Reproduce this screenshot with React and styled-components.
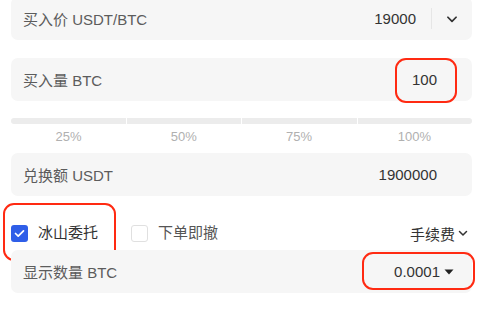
import React from 'react'
import styled, { createGlobalStyle } from 'styled-components'

const GlobalStyle = createGlobalStyle`
  body {
    margin: 0;
    background: #fff;
    font-family: "Liberation Sans", "Noto Sans CJK SC", sans-serif;
    overflow: hidden;
  }
`

const Page = styled.div`
  width: 461px;
  margin: -3px 0 0 11px;
  display: flex;
  flex-direction: column;
`

const Field = styled.div`
  height: 43px;
  box-sizing: border-box;
  background: #f6f6f6;
  border-radius: 7px;
  display: flex;
  align-items: center;
  padding: 0 ${p => p.$pr || 35}px 0 12px;
  margin-top: ${p => p.$mt || 0}px;
  position: relative;
`

const Label = styled.span`
  flex: 1;
  color: #5c5c5c;
  font-size: 15px;
`

const Value = styled.span`
  color: #333;
  font-size: 15px;
  line-height: 17px;
  position: relative;
  display: flex;
  align-items: center;
`

const Divider = styled.span`
  width: 1px;
  height: 21px;
  background: #e6e6e6;
  margin: 0 13px 0 15px;
`

const Marked = styled.span`
  position: absolute;
  left: ${p => p.$l}px;
  right: ${p => p.$r}px;
  top: ${p => p.$t}px;
  bottom: ${p => p.$b}px;
  border: 2.5px solid #ff2a12;
  border-radius: 11px;
  pointer-events: none;
`

const Track = styled.div`
  margin-top: 17px;
  height: 6px;
  display: grid;
  grid-template-columns: repeat(4, 1fr);
  gap: 1px;
  border-radius: 3px;
  overflow: hidden;
`

const Segment = styled.span`
  background: #ececec;
`

const Marks = styled.div`
  display: grid;
  grid-template-columns: repeat(4, 1fr);
  margin-top: 3px;
`

const Mark = styled.span`
  text-align: center;
  font-size: 13px;
  color: #b0b0b0;
  line-height: 20px;
`

const OptionRow = styled.div`
  display: flex;
  align-items: center;
  height: 30px;
  margin-top: 22px;
`

const Option = styled.label`
  display: flex;
  align-items: center;
  gap: 10px;
  font-size: 15px;
  line-height: 20px;
  color: ${p => (p.$checked ? '#333' : '#555')};
  margin-right: 33px;
  position: relative;
`

const Box = styled.span`
  width: 17px;
  height: 17px;
  box-sizing: border-box;
  border-radius: 3px;
  background: ${p => (p.$checked ? '#2f5ee8' : '#fff')};
  border: ${p => (p.$checked ? 'none' : '1.5px solid #e0e0e0')};
  display: flex;
  align-items: center;
  justify-content: center;
`

const Fee = styled.span`
  margin-left: auto;
  margin-right: 3px;
  font-size: 15px;
  color: #333;
  display: flex;
  align-items: center;
  gap: 2px;
`

const Chevron = ({ size = 12 }) => (
  <svg width={size} height={size} viewBox="0 0 12 12" fill="none">
    <path d="M2.5 4.5 6 8l3.5-3.5" stroke="#333" strokeWidth="1.5" strokeLinecap="round" strokeLinejoin="round" />
  </svg>
)

const Caret = () => (
  <svg width="10" height="6" viewBox="0 0 10 6" style={{ marginLeft: 4 }}>
    <path d="M0.5 0.5h9L5 5.5z" fill="#222" />
  </svg>
)

export default function App() {
  return (
    <>
      <GlobalStyle />
      <Page>
        <Field $pr={13}>
          <Label>买入价 USDT/BTC</Label>
          <Value>19000</Value>
          <Divider />
          <Chevron size={14} />
        </Field>

        <Field $mt={18}>
          <Label>买入量 BTC</Label>
          <Value>
            100
            <Marked $l={-17} $r={-20} $t={-13} $b={-15} />
          </Value>
        </Field>

        <Track>
          <Segment />
          <Segment />
          <Segment />
          <Segment />
        </Track>
        <Marks>
          <Mark>25%</Mark>
          <Mark>50%</Mark>
          <Mark>75%</Mark>
          <Mark>100%</Mark>
        </Marks>

        <Field $mt={6}>
          <Label>兑换额 USDT</Label>
          <Value>1900000</Value>
        </Field>

        <OptionRow>
          <Option $checked>
            <Box $checked>
              <svg width="11" height="9" viewBox="0 0 11 9" fill="none">
                <path d="M1.5 4.5 4.2 7.2 9.5 1.8" stroke="#fff" strokeWidth="1.7" strokeLinecap="round" strokeLinejoin="round" />
              </svg>
            </Box>
            冰山委托
            <Marked $l={-8} $r={-18} $t={-20} $b={-18} />
          </Option>
          <Option>
            <Box />
            下单即撤
          </Option>
          <Fee>
            手续费
            <Chevron />
          </Fee>
        </OptionRow>

        <Field $mt={2} $pr={18}>
          <Label>显示数量 BTC</Label>
          <Value>
            0.0001
            <Caret />
            <Marked $l={-32} $r={-21} $t={-11} $b={-10} />
          </Value>
        </Field>
      </Page>
    </>
  )
}
